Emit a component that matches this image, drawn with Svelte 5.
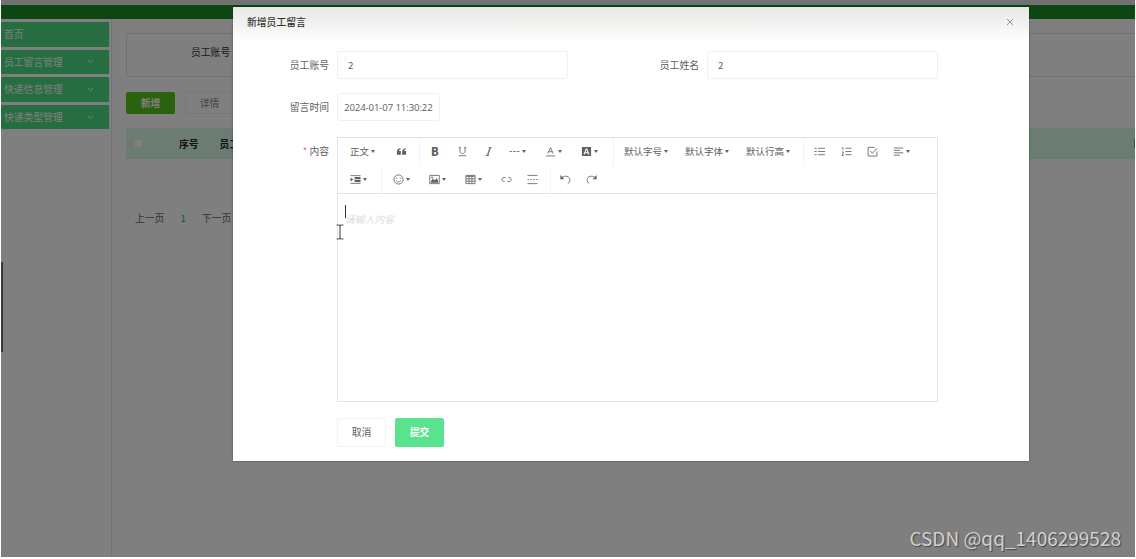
<script>
    const menus = [
        { title: '首页', open: false },
        { title: '员工留言管理', open: true },
        { title: '快递信息管理', open: true },
        { title: '快递类型管理', open: true }
    ];

    // every icon is drawn on a 12x12 grid
    const icons = {
        quote: { fill: 'M1 6.5C1 4 2.4 2.6 5 2.4V3.6C3.9 3.9 3.4 4.5 3.3 5.4H5.3V9.6H1zM6.7 6.5C6.7 4 8.1 2.6 10.7 2.4V3.6C9.6 3.9 9.1 4.5 9 5.4H11V9.6H6.7z' },
        underline: { line: 'M3.2 1.8V5.6C3.2 9 8.8 9 8.8 5.6V1.8M1.8 1.8H4.4M7.6 1.8H10.2M2 10.6H10' },
        italic: { line: 'M7.6 1.8L4.6 10.4M8.2 1.8L5.2 10.4M6 1.8H9.6M3 10.4H6.4' },
        more: { line: 'M.5 6H3.5M4.5 6H7.5M8.5 6H11.5' },
        color: { line: 'M3 8.3L6 1.8L9 8.3M4 6.2H8M1.2 10.8H10.8' },
        bgColor: { fill: 'M1 1H11V11H1zM5.3 2.8L2.7 9.2H4L4.5 7.8H7.5L8 9.2H9.3L6.7 2.8zM6 4.2L7.1 6.8H4.9z' },
        list: { line: 'M4.5 2.5H12M4.5 6H12M4.5 9.5H12M.5 2.5H3M.5 6H3M.5 9.5H3' },
        ordered: { line: 'M4.8 2.5H11.5M4.8 6H11.5M4.8 9.5H11.5M1.2 1.6H2.1V4.4M1 6.6H2.8L1.2 10.4H3' },
        todo: { line: 'M10.8 6V11H1.2V1.5H8.5M3.5 5.4L6 8L11 2.3' },
        align: { line: 'M.8 2.2H11.2M.8 4.8H7.6M.8 7.4H11.2M.8 10H7.6' },
        indent: { line: 'M.5 1.8H11.5M.5 10.2H11.5', fill: 'M.6 3.7L3.8 6L.6 8.3zM5 3.4H11.5V5.4H5zM5 6.4H11.5V8.6H5z' },
        emoji: { line: 'M6 1A5 5 0 1 1 6 11A5 5 0 1 1 6 1M3.5 7C4.5 9.2 7.5 9.2 8.5 7M4 4V5.2M8 4V5.2' },
        image: { line: 'M.8 1.5H11.2V10.5H.8z', fill: 'M2 9.5V7.8L4.4 5L6.2 7L8.2 4.6L10 7.4V9.5zM2.5 3H4.2V4.6H2.5z' },
        table: { line: 'M1 1.5H11V10.5H1zM1 2.6H11M1 5.3H11M1 7.9H11M4.4 1.5V10.5M7.6 1.5V10.5' },
        code: { line: 'M5 3.8H3.2C.2 3.8.2 8.2 3.2 8.2H4M7 8.2H8.8C11.8 8.2 11.8 3.8 8.8 3.8H8' },
        divider: { line: 'M.5 1.5H11.5M.5 10.5H11.5M.5 6H2.2M3.5 6H5.2M6.6 6H8.3M9.8 6H11.5' },
        undo: { line: 'M2 3.8C5.5 1.2 10.6 2.4 10.8 6.2C10.8 8 10 9.6 8.4 10.8', fill: 'M.4 1.2V5.6H4.8z' },
        redo: { line: 'M10 3.8C6.5 1.2 1.4 2.4 1.2 6.2C1.2 8 2 9.6 3.6 10.8', fill: 'M11.6 1.2V5.6H7.2z' }
    };

    const toolbar = [
        [
            { text: '正文', width: 46, caret: true },
            { icon: 'quote', width: 23 },
            { sep: true, width: 12 },
            { text: 'B', width: 26, bold: true },
            { icon: 'underline', width: 26 },
            { icon: 'italic', width: 26 },
            { icon: 'more', width: 36, caret: true },
            { icon: 'color', width: 36, caret: true },
            { icon: 'bgColor', width: 32, caret: true },
            { sep: true, width: 11 },
            { text: '默认字号', width: 61, caret: true },
            { text: '默认字体', width: 61, caret: true },
            { text: '默认行高', width: 57, caret: true },
            { sep: true, width: 11 },
            { icon: 'list', width: 27 },
            { icon: 'ordered', width: 26 },
            { icon: 'todo', width: 26 },
            { icon: 'align', width: 30, caret: true }
        ],
        [
            { icon: 'indent', width: 31, caret: true },
            { sep: true, width: 12 },
            { icon: 'emoji', width: 36, caret: true },
            { icon: 'image', width: 36, caret: true },
            { icon: 'table', width: 36, caret: true },
            { icon: 'code', width: 26 },
            { icon: 'divider', width: 23 },
            { sep: true, width: 10 },
            { icon: 'undo', width: 26 },
            { icon: 'redo', width: 26 }
        ]
    ];

    let account = '2';
    let name = '2';
    let time = '2024-01-07 11:30:22';
</script>

<div class="screen">
    <div class="strip"></div>
    <div class="header"></div>
    <div class="body">
        <div class="sidebar">
            {#each menus as menu}
                <div class="menu">
                    <span>{menu.title}</span>
                    {#if menu.open}
                        <svg width="7" height="5" viewBox="0 0 7 5"><path d="M1 1L3.5 3.5L6 1" /></svg>
                    {/if}
                </div>
            {/each}
        </div>
        <div class="content">
            <div class="search">员工账号</div>
            <div class="actions">
                <div class="action add">新增</div>
                <div class="action detail">详情</div>
            </div>
            <div class="thead">
                <i class="checkbox"></i>
                <span class="no">序号</span>
                <span class="account">员工账号</span>
                <i class="edge"></i>
            </div>
            <div class="pager">
                <span>上一页</span>
                <span class="current">1</span>
                <span>下一页</span>
            </div>
        </div>
    </div>
    <div class="scroll"></div>
    <div class="shade"></div>

    <div class="modal">
        <div class="title">
            <span>新增员工留言</span>
            <svg width="8" height="8" viewBox="0 0 8 8"><path d="M1 1L7 7M7 1L1 7" /></svg>
        </div>
        <div class="row">
            <span class="label">员工账号</span>
            <div class="input wide">{account}</div>
            <span class="label second">员工姓名</span>
            <div class="input wide">{name}</div>
        </div>
        <div class="row">
            <span class="label">留言时间</span>
            <div class="input date">{time}</div>
        </div>
        <div class="row edit">
            <span class="label"><b>*</b> 内容</span>
            <div class="editor">
                <div class="toolbar">
                    {#each toolbar as line}
                        <div class="line">
                            {#each line as item}
                                <div class="tool" class:sep={item.sep} style="width: {item.width}px">
                                    {#if item.text}
                                        <span class:bold={item.bold}>{item.text}</span>
                                    {:else if item.icon}
                                        <svg width="11" height="11" viewBox="0 0 12 12">
                                            {#if icons[item.icon].line}
                                                <path class="stroke" d={icons[item.icon].line} />
                                            {/if}
                                            {#if icons[item.icon].fill}
                                                <path class="solid" d={icons[item.icon].fill} />
                                            {/if}
                                        </svg>
                                    {/if}
                                    {#if item.caret}
                                        <i class="caret"></i>
                                    {/if}
                                </div>
                            {/each}
                        </div>
                    {/each}
                </div>
                <div class="area">
                    <i class="cursor"></i>
                    <span class="placeholder">请输入内容</span>
                </div>
            </div>
        </div>
        <div class="buttons">
            <div class="btn">取消</div>
            <div class="btn submit">提交</div>
        </div>
    </div>

    <svg class="pointer" width="8" height="16" viewBox="0 0 8 16"><path d="M.5 1H3L4 2L5 1H7.5M4 2V14M.5 15H3L4 14L5 15H7.5" /></svg>
    <div class="watermark">CSDN @qq_1406299528</div>
</div>

<style>
    :global(body) {
        background: #fff;
    }

    .screen {
        position: relative;
        box-sizing: border-box;
        width: 1134px;
        height: 557px;
        margin-left: 1px;
        overflow: hidden;
        background: #fff;
        font-family: "Noto Sans CJK SC", sans-serif;
        font-size: 9.8px;
        line-height: 14px;
        color: #606060;
        white-space: nowrap;
    }

    .strip {
        height: 5px;
        background: #e2e2e2;
    }

    .header {
        height: 14px;
        background: #1a8c26;
    }

    .body {
        display: flex;
        height: 538px;
    }

    .sidebar {
        box-sizing: border-box;
        width: 111px;
        padding-top: 3px;
        border-right: 1px solid #e8e8e8;
    }

    .menu {
        display: flex;
        align-items: center;
        justify-content: space-between;
        box-sizing: border-box;
        width: 108px;
        height: 24.6px;
        margin-bottom: 3px;
        padding: 0 15px 0 3px;
        background: #4cdc82;
        color: #fff;
    }

    .menu path {
        fill: none;
        stroke: #fff;
    }

    .content {
        flex: 1;
        min-width: 0;
        padding: 14px 0 0 14px;
    }

    .search {
        box-sizing: border-box;
        width: 1020px;
        height: 44px;
        padding: 11px 64px;
        border: 1px solid #e2e2e2;
        color: #333;
    }

    .actions {
        display: flex;
        gap: 10px;
        margin-top: 15px;
    }

    .action {
        box-sizing: border-box;
        width: 49px;
        height: 22px;
        border-radius: 2px;
        line-height: 22px;
        text-align: center;
    }

    .add {
        background: #56c41c;
        font-weight: bold;
        color: #fff;
    }

    .detail {
        border: 1px solid #eee;
        line-height: 20px;
        color: #888;
    }

    .thead {
        display: flex;
        align-items: center;
        height: 31px;
        margin-top: 14px;
        background: #d6fae5;
        font-weight: bold;
        color: #222;
    }

    .checkbox {
        width: 7px;
        height: 7px;
        margin-left: 9px;
        border-radius: 1px;
        background: #fff;
        box-shadow: 0 0 0 1px #eee;
    }

    .no {
        margin-left: 37px;
    }

    .account {
        margin-left: 21px;
    }

    .edge {
        width: 1px;
        height: 9px;
        margin-left: auto;
        background: #5ba878;
    }

    .pager {
        display: flex;
        gap: 16px;
        margin: 52px 0 0 9px;
        color: #666;
    }

    .current {
        color: #2fae62;
    }

    .scroll {
        position: absolute;
        top: 262px;
        left: 0;
        width: 1.5px;
        height: 90px;
        background: #667070;
    }

    .shade {
        position: absolute;
        inset: 0;
        background: rgba(0, 0, 0, .5);
    }

    .modal {
        position: absolute;
        top: 7px;
        left: 232px;
        width: 796px;
        height: 454px;
        background: linear-gradient(#e6e8e4, #fff 36px);
        box-shadow: 0 0 2px rgba(0, 0, 0, .4);
    }

    .title {
        display: flex;
        align-items: center;
        justify-content: space-between;
        height: 30px;
        padding: 0 15px 0 14px;
        font-weight: 500;
        color: #333;
    }

    .title path {
        fill: none;
        stroke: #999;
    }

    .row {
        display: flex;
        margin-top: 14px;
    }

    .label {
        width: 96px;
        margin-right: 8px;
        line-height: 28px;
        text-align: right;
    }

    .label b {
        font-weight: normal;
        color: #f56c6c;
    }

    .label.second {
        width: 131px;
    }

    .input {
        box-sizing: border-box;
        height: 28px;
        padding-left: 10px;
        border: 1px solid #f0f0f0;
        border-radius: 2px;
        line-height: 26px;
    }

    .wide {
        width: 231px;
    }

    .date {
        width: 103px;
        padding-left: 6px;
        font-family: "Open Sans", sans-serif;
        font-size: 9.6px;
        letter-spacing: -.1px;
        line-height: 27px;
    }

    .row.edit {
        margin-top: 16px;
    }

    .editor {
        box-sizing: border-box;
        width: 601px;
        height: 265px;
        border: 1px solid #e2e2e2;
    }

    .toolbar {
        height: 55px;
        border-bottom: 1px solid #e2e2e2;
    }

    .line {
        display: flex;
        height: 28px;
        padding-left: 12px;
    }

    .tool {
        display: flex;
        flex: none;
        align-items: center;
        box-sizing: border-box;
        padding-bottom: 2px;
        font-size: 9.5px;
    }

    .tool.sep {
        border-left: 1px solid #f4f4f4;
    }

    .bold {
        font-size: 11px;
        font-weight: 900;
    }

    .stroke {
        fill: none;
        stroke: #707070;
    }

    .solid {
        fill: #606060;
        fill-rule: evenodd;
    }

    .caret {
        margin-left: 2px;
        border: 2px solid transparent;
        border-top: 3px solid #606060;
        border-bottom: 0;
    }

    .area {
        padding: 11px 0 0 7px;
    }

    .cursor {
        display: block;
        width: 1px;
        height: 13px;
        background: #333;
    }

    .placeholder {
        display: block;
        margin: -6px 0 0;
        font-style: italic;
        color: #dcdcdc;
    }

    .buttons {
        display: flex;
        gap: 9px;
        margin: 16px 0 0 104px;
    }

    .btn {
        box-sizing: border-box;
        width: 49px;
        height: 29px;
        border: 1px solid #f2f2f2;
        border-radius: 2px;
        line-height: 27px;
        text-align: center;
    }

    .submit {
        border-color: #5ae38f;
        background: #5ae38f;
        font-weight: bold;
        color: #fff;
    }

    .pointer {
        position: absolute;
        top: 224px;
        left: 335px;
        fill: none;
        stroke: #555;
        stroke-width: 1.2;
    }

    .watermark {
        position: absolute;
        right: 14px;
        bottom: 6px;
        font-size: 19px;
        line-height: 26px;
        color: #d2d2d2;
        text-shadow: 1px 1px 1px #444;
    }
</style>
